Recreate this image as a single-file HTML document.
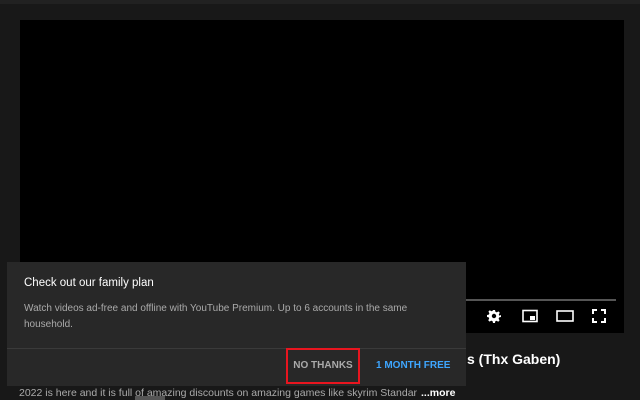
<!DOCTYPE html>
<html><head><style>
body{margin:0;width:640px;height:400px;background:#181818;position:relative;overflow:hidden;font-family:"Liberation Sans",sans-serif}
.top{position:absolute;left:0;top:0;width:640px;height:4px;background:#212121}
.vid{position:absolute;left:20px;top:20px;width:604px;height:313px;background:#000}
.prog{position:absolute;left:443px;top:279px;width:153px;height:2px;background:#555}
.ic{position:absolute;top:289px}
.title{position:absolute;left:467px;top:351px;color:#fff;font-size:14px;font-weight:bold}
.desc{position:absolute;left:19px;top:387px;width:398px;overflow:hidden;color:#aaa;font-size:10.5px;white-space:nowrap}
.more{position:absolute;left:421px;top:387px;color:#fff;font-size:10.5px;font-weight:bold}
.dlg{position:absolute;left:7px;top:262px;width:459px;height:124px;background:#282828}
.dlg h1{position:absolute;left:17px;top:15px;margin:0;font-size:11.5px;font-weight:normal;color:#fff}
.dlg p{position:absolute;left:17px;top:39px;margin:0;width:420px;font-size:10px;line-height:15.5px;color:#aaa}
.div{position:absolute;left:0;top:86px;width:459px;height:1px;background:#3a3a3a}
.no{position:absolute;left:279px;top:86px;width:74px;height:36px;box-sizing:border-box;border:2px solid #e8151f;color:#aaa;font-size:10px;font-weight:bold;text-align:center;line-height:32px}
.yes{position:absolute;left:369px;top:86px;height:36px;line-height:36px;color:#3ea6ff;font-size:10px;font-weight:bold}
.sb{position:absolute;left:135px;top:396px;width:30px;height:4px;background:#555}
</style></head><body>
<div class="top"></div>
<div class="vid">
<div class="prog"></div>
<svg class="ic" style="left:467px" width="14" height="14" viewBox="0 0 14 14"><path fill="#fff" d="M6 1h2l.4 1.8 1.4.6 1.6-1 1.4 1.4-1 1.6.6 1.4L14 6v2l-1.8.4-.6 1.4 1 1.6-1.4 1.4-1.6-1-1.4.6L8 14H6l-.4-1.8-1.4-.6-1.6 1-1.4-1.4 1-1.6-.6-1.4L0 8V6l1.8-.4.6-1.4-1-1.6L2.8 1.2l1.6 1 1.4-.6z"/><circle cx="7" cy="7" r="2.2" fill="#000"/></svg>
<svg class="ic" style="left:502px" width="16" height="14" viewBox="0 0 16 14"><rect x="1" y="1.5" width="14" height="11" fill="none" stroke="#fff" stroke-width="1.6"/><rect x="8" y="7" width="5" height="4" fill="#fff"/></svg>
<svg class="ic" style="left:536px" width="18" height="14" viewBox="0 0 18 14"><rect x="1" y="2" width="16" height="10" fill="none" stroke="#fff" stroke-width="1.6"/></svg>
<svg class="ic" style="left:572px" width="14" height="14" viewBox="0 0 14 14"><path d="M1 5V1h4M9 1h4v4M13 9v4H9M5 13H1V9" fill="none" stroke="#fff" stroke-width="2"/></svg>
</div>
<div class="title">s (Thx Gaben)</div>
<div class="desc">2022 is here and it is full of amazing discounts on amazing games like skyrim Standard ed</div>
<div class="more">...more</div>
<div class="sb"></div>
<div class="dlg">
<h1>Check out our family plan</h1>
<p>Watch videos ad-free and offline with YouTube Premium. Up to 6 accounts in the same household.</p>
<div class="div"></div>
<div class="no">NO THANKS</div>
<div class="yes">1 MONTH FREE</div>
</div>
</body></html>
